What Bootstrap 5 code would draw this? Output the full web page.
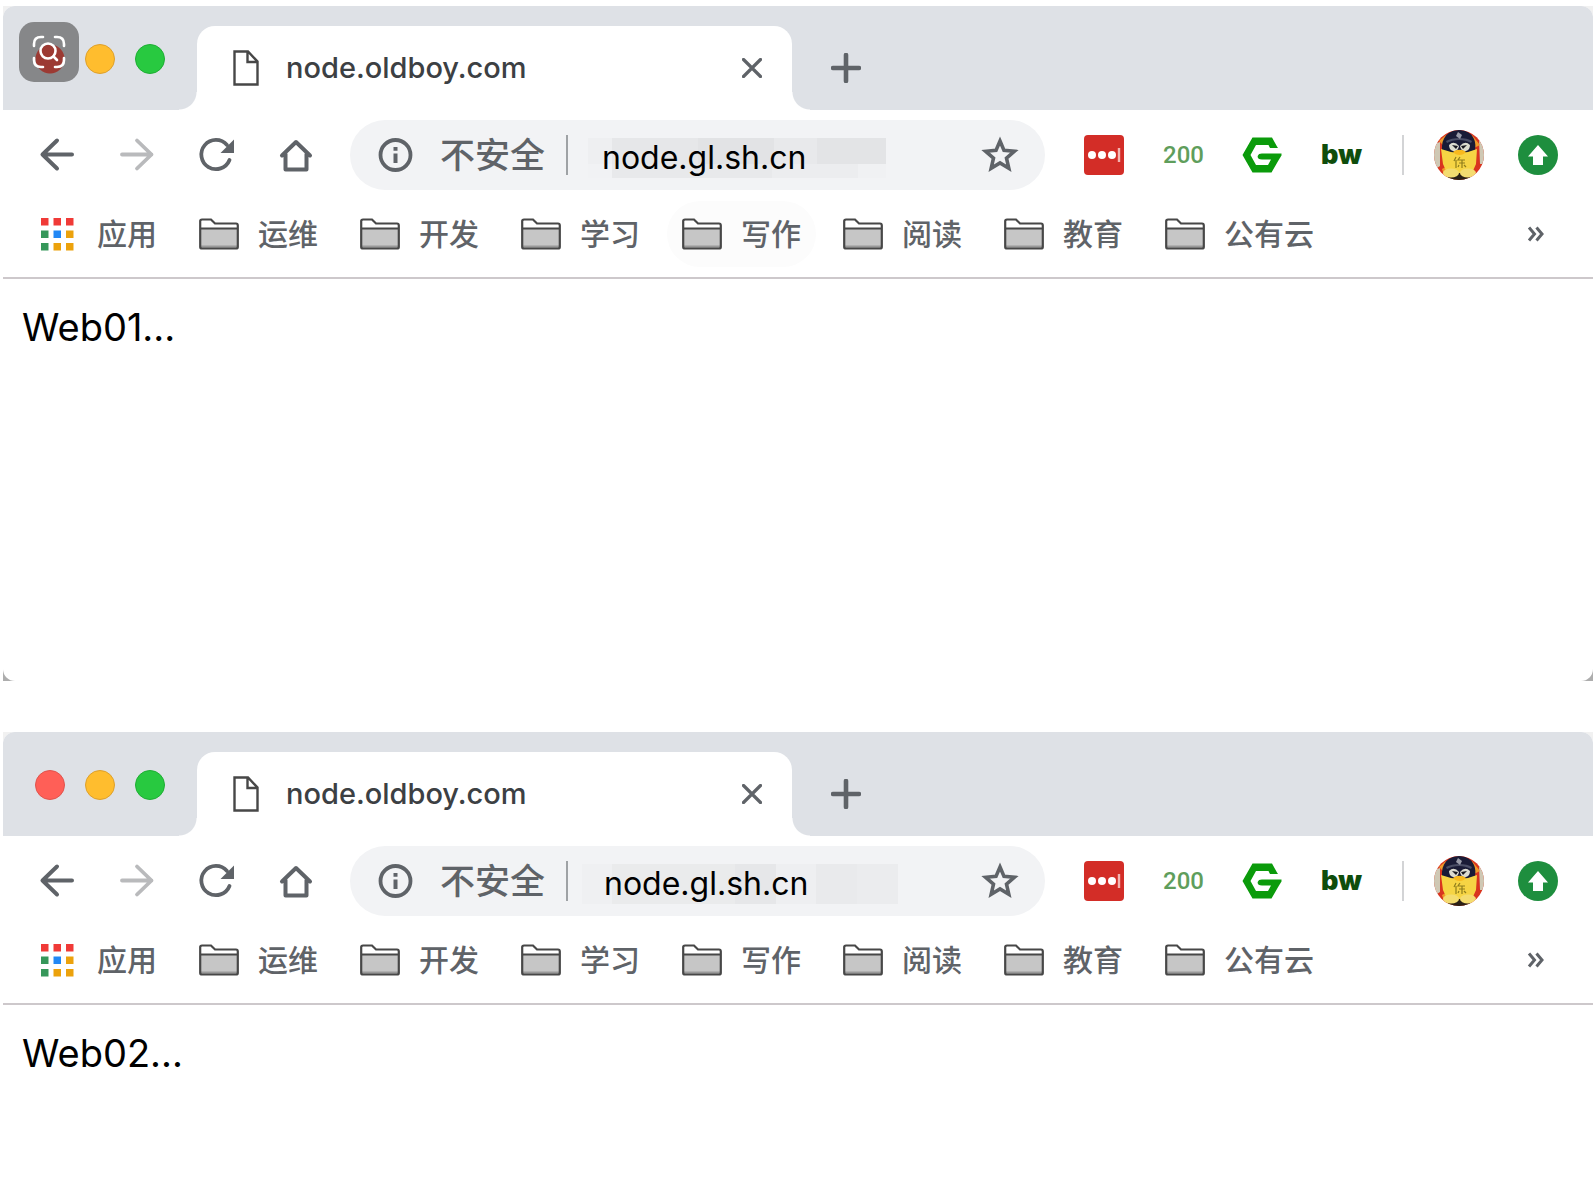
<!DOCTYPE html>
<html lang="zh-CN">
<head>
<meta charset="utf-8">
<meta name="viewport" content="width=device-width, initial-scale=1">
<title>node.oldboy.com</title>
<link href="https://cdn.jsdelivr.net/npm/bootstrap@5.3.0/dist/css/bootstrap.min.css" rel="stylesheet">
<style>
:root { --strip: #dee1e6; --ink: #5f6368; --pill: #f2f3f5; }
body { font-family: Inter, "Noto Sans CJK SC", sans-serif; color: #000; background: #fff; padding: 6px 3px 0; }
button { border: 0; background: none; padding: 0; color: var(--ink); }
svg { display: block; flex: none; }
.win-frame { background: linear-gradient(#f1f1f1 50%, #adadad 50%); margin-bottom: 51px; }
.win-frame.last { background: #f1f1f1; margin-bottom: 0; }
.win-body { background: #fff; border-radius: 12px; overflow: hidden; }
.last .win-body { border-radius: 12px 12px 0 0; }
.tabstrip { background: var(--strip); height: 104px; padding: 20px 0 0 32px; }
.lights { gap: 20px; width: 162px; padding-top: 18px; }
.light { width: 30px; height: 30px; border-radius: 50%; border: 1px solid; }
.light-r { background: #ff5f57; border-color: #e0544d; }
.light-y { background: #ffbd2e; border-color: #dea02c; }
.light-g { background: #28c940; border-color: #1eae34; }
.lens { left: 16px; top: 16px; width: 60px; height: 60px; border-radius: 15px; background: radial-gradient(circle at 31px 37px, #9c3a33 14px, #868789 15px); display: grid; place-items: center; }
.tab-active { background: #fff; width: 595px; height: 84px; border-radius: 18px 18px 0 0; padding: 0 30px 0 36px; }
.tab-active::before, .tab-active::after { content: ""; position: absolute; bottom: 0; width: 18px; height: 18px; }
.tab-active::before { left: -18px; background: radial-gradient(circle at 0 0, transparent 17px, #fff 18px); }
.tab-active::after { right: -18px; background: radial-gradient(circle at 100% 0, transparent 17px, #fff 18px); }
.tab-name { font-size: 29px; font-weight: 500; line-height: 40px; color: #3c4043; margin-left: 27px; }
.new-tab { margin-left: 39px; }
.toolbar { padding: 10px 35px 9px 34px; }
.nav-set { gap: 39px; margin-right: 36px; }
.nav-set button, .tool { width: 40px; height: 40px; display: grid; place-items: center; flex: none; }
.omni { background: var(--pill); height: 70px; border-radius: 35px; padding: 0 25px 0 28px; flex: 0 1 695px; min-width: 0; }
.omni .secure { font-size: 35px; font-weight: 500; line-height: 50px; color: var(--ink); margin-left: 26px; flex: none; }
.omni-rule { width: 2px; height: 40px; background: #9fa2a5; margin-left: 21px; flex: none; }
.url { border: 0; outline: 0; height: 50px; min-width: 0; font-size: 32px; line-height: 44px; color: #000; background-color: transparent; background-repeat: no-repeat; }
.url-a { margin-left: 20px; width: 298px; padding: 4px 0 0 14px;
  background-image: linear-gradient(90deg, #eeeff1 24px, #e6e7e9 24px 110px, #e2e3e5 110px 186px, #e8e9eb 186px 229px, #e3e4e6 229px), linear-gradient(90deg, #f1f2f4 24px, #e8e9eb 24px 184px, #ecedef 184px 270px, #f0f1f3 270px);
  background-size: 100% 26px, 100% 14px; background-position: 0 8px, 0 34px; }
.url-b { margin-left: 14px; width: 332px; padding: 4px 0 0 22px;
  background-image: linear-gradient(90deg, #eff0f2 30px, #eaebec 30px 153px, #e6e7e9 153px 194px, #eeeff1 194px 234px, #e9eaec 234px 275px, #ebecee 275px 316px, transparent 316px);
  background-size: 100% 40px; background-position: 0 8px; }
.ext-set { margin-left: 39px; gap: 39px; }
.lastpass { background: #d32d27; border-radius: 4px; }
.t200 { font-family: Roboto, sans-serif; font-weight: 500; font-size: 24px; line-height: 28px; color: #5f9e5c; }
.tbw { font-weight: 900; font-size: 27px; line-height: 30px; color: #0f4d0c; }
.ext-rule { width: 2px; height: 40px; background: #d3d4d6; margin-left: 2px; }
.user-set { gap: 34px; margin-left: auto; }
.avatar { width: 50px; height: 50px; border-radius: 50%; overflow: hidden; }
.bookmarks { height: 80px; padding: 0 49px 8px 37px; gap: 42px; border-bottom: 2px solid #cdc8cb; }
.bm { color: var(--ink); text-decoration: none; gap: 19px; font-size: 30px; font-weight: 500; line-height: 44px; white-space: nowrap; }
.bm-apps { gap: 23px; }
.bm-hot { background: #fcfcfc; border-radius: 33px; padding: 11px 15px; margin: 0 -15px; }
.page-text { font-size: 38px; line-height: 48px; padding: 24px 19px; margin: 0; }
.page-tall { min-height: 402px; }
</style>
</head>
<body class="d-flex flex-column min-vh-100">

<svg width="0" height="0" class="position-absolute" aria-hidden="true">
  <defs>
    <symbol id="i-doc" viewBox="0 0 26 36"><path d="M1.5 1.5H15L24.500 11.500V34.500H1.500Z M14.500 1.500V12H24.500" fill="none" stroke="#474747" stroke-width="2.400"/></symbol>
    <symbol id="i-x" viewBox="0 0 20 20"><path d="M1.500 1.500L18.500 18.500M18.500 1.500L1.500 18.500" stroke="#5f6368" stroke-width="3.200" stroke-linecap="round"/></symbol>
    <symbol id="i-plus" viewBox="0 0 30 30"><path d="M15 2V28M2 15H28" stroke="#5f6368" stroke-width="4.600" stroke-linecap="round"/></symbol>
    <symbol id="i-back" viewBox="0 0 40 40"><path d="M35 19.500H5.500M20 5.500L5.500 19.500L20 33.500" fill="none" stroke="currentColor" stroke-width="4" stroke-linecap="round" stroke-linejoin="round"/></symbol>
    <symbol id="i-fwd" viewBox="0 0 40 40"><path d="M6 19.500H35.500M21 5.500L35.500 19.500L21 33.500" fill="none" stroke="#b9babc" stroke-width="3.800" stroke-linecap="round" stroke-linejoin="round"/></symbol>
    <symbol id="i-reload" viewBox="0 0 40 40"><path d="M34.500 25A14.600 14.600 0 1 1 32 10" fill="none" stroke="currentColor" stroke-width="3.800" stroke-linecap="round"/><path d="M39 4.500V18H25.500Z" fill="currentColor"/></symbol>
    <symbol id="i-home" viewBox="0 0 40 40"><path d="M8 20.500L22 7L36 20.500M11.500 19V34.500H32.500V19" fill="none" stroke="currentColor" stroke-width="4" stroke-linecap="round" stroke-linejoin="round"/></symbol>
    <symbol id="i-info" viewBox="0 0 36 36"><circle cx="17.500" cy="18" r="15" fill="none" stroke="#5f6368" stroke-width="3.800"/><path d="M15.500 16.500H19.500V26H15.500ZM15.500 10H19.500V13.800H15.500Z" fill="#5f6368"/></symbol>
    <symbol id="i-star" viewBox="0 0 40 40"><path d="M20 6L24 15.400L34.300 16.300L26.500 23.100L28.800 33.200L20 27.900L11.200 33.200L13.500 23.100L5.700 16.300L16 15.400Z" fill="none" stroke="#5f6368" stroke-width="3.600"/></symbol>
    <symbol id="i-lp" viewBox="0 0 40 40"><g fill="#fff"><circle cx="8" cy="20" r="4"/><circle cx="18" cy="20" r="4"/><circle cx="28" cy="20" r="4"/></g><path d="M35 13V27" stroke="#f3b5b2" stroke-width="2.400"/></symbol>
    <symbol id="i-g" viewBox="0 0 40 36"><path d="M10.500 .5H30L35 9.500L36 11H28L26.500 8H14L8.500 18L14 28H26L29 22.500H20C16 22.500 15 20 16 18.500C16.500 17.300 17.500 16.500 20 16.500H39.500V18.500L37 22.500L29.500 35.500H10.500L.5 18Z" fill="#0b9b0b"/></symbol>
    <symbol id="i-up" viewBox="0 0 40 40"><circle cx="20" cy="20" r="20" fill="#1e8e3e"/><path d="M20 10L30 21.500H25V30H15V21.500H10Z" fill="#fff"/></symbol>
    <symbol id="i-avatar" viewBox="0 0 50 50">
      <rect width="50" height="50" fill="#d9351f"/>
      <path d="M0 14L6 12V36L0 40ZM45 10L50 13V34H46Z" fill="#cfc8b4"/>
      <path d="M5 11L12 5L11 17ZM38 5L46 15L40 18ZM8 39L11 48L17 50L12 37Z" fill="#f09a2b"/>
      <path d="M8 20C7 8 14 0 25 0S43 8 41 20L36 24H12Z" fill="#191b36"/>
      <path d="M12 11C19 7 32 7 38 11L37 13C30 9 20 9 13 13Z" fill="#4a4e66"/>
      <path d="M24 2L28 5L26 9L22 6Z" fill="#9a9ca9"/>
      <path d="M15 15Q20 10 25 16Q24 22 19 21Q15 20 15 15Z" fill="#dcdcd0"/><path d="M36 15Q31 10 26 16Q27 22 32 21Q36 20 36 15Z" fill="#dcdcd0"/>
      <path d="M18 15L24 16L22 19ZM33 15L27 16L29 19Z" fill="#17171f"/>
      <path d="M7 19L17 22L25 23L34 22L43 19L42 34L38 43L25 49L13 43L9 34Z" fill="#f6d444"/>
      <path d="M19 22C22 19 29 19 32 22C29 26 22 26 19 22Z" fill="#f8b91e"/>
      <path d="M12 41Q25 45 39 41L36 50H14Z" fill="#2b2016"/>
      <ellipse cx="17" cy="43" rx="8" ry="4.500" fill="#f4dc70"/><ellipse cx="34" cy="43" rx="8" ry="4.500" fill="#f4dc70"/>
      <path d="M22 27L20 31M22 30V38M26 27L24 30H31M25 33H31M28 30V38M25 35L24 37M30 35L32 37" fill="none" stroke="#8f7d1c" stroke-width="1.200"/>
    </symbol>
    <symbol id="i-apps" viewBox="0 0 34 34"><path d="M1 1H8.500V8.500H1ZM13.500 1H21V8.500H13.500ZM26 1H33.500V8.500H26Z" fill="#f03a37"/><path d="M1 13.500H8.500V21H1ZM1 26H8.500V33.500H1Z" fill="#36975a"/><path d="M13.500 13.500H21V21H13.500Z" fill="#2288f5"/><path d="M26 13.500H33.500V21H26ZM13.500 26H21V33.500H13.500ZM26 26H33.500V33.500H26Z" fill="#eca20c"/></symbol>
    <symbol id="i-folder" viewBox="0 0 40 32"><path d="M1.200 29V3Q1.200 1.500 3 1.500H12L16 5.500H37Q38.800 5.500 38.800 7.500V29Q38.800 30.500 37 30.500H3Q1.200 30.500 1.200 29Z" fill="#fff"/><path d="M1.200 10.500H38.800V30H1.200Z" fill="#c6c6c6"/><path d="M2 28.500H38" stroke="#999" stroke-width="2"/><path d="M1.200 10.500H38.800M1.200 29V3Q1.200 1.500 3 1.500H12L16 5.500H37Q38.800 5.500 38.800 7.500V29Q38.800 30.500 37 30.500H3Q1.200 30.500 1.200 29Z" fill="none" stroke="#474747" stroke-width="2.200"/></symbol>
    <symbol id="i-more" viewBox="0 0 16 16"><path d="M1.500 1.500L7 8L1.500 14.500M9 1.500L14.500 8L9 14.500" fill="none" stroke="#5f6368" stroke-width="3"/></symbol>
    <symbol id="i-lens" viewBox="0 0 34 34"><g fill="none" stroke="#fff" stroke-width="2.600" stroke-linecap="round"><path d="M2 11V9Q2 2 9 2H11M23 2H25Q32 2 32 9V11M32 23V25Q32 32 25 32H23M11 32H9Q2 32 2 25V23"/><circle cx="16" cy="16" r="7.500"/><path d="M21.500 21.500L25 25"/></g></symbol>
  </defs>
</svg>

<section class="win-frame position-relative">
  <div class="win-body">
    <header class="tabstrip d-flex">
      <div class="lights d-flex flex-shrink-0"><span class="light light-r"></span><span class="light light-y"></span><span class="light light-g"></span></div>
      <div class="tab-active position-relative d-flex align-items-center">
        <svg width="26" height="36"><use href="#i-doc"/></svg>
        <span class="tab-name">node.oldboy.com</span>
        <button class="ms-auto" aria-label="关闭标签页"><svg width="20" height="20"><use href="#i-x"/></svg></button>
      </div>
      <button class="new-tab" aria-label="新标签页"><svg width="30" height="30"><use href="#i-plus"/></svg></button>
    </header>
    <div class="toolbar d-flex align-items-center">
      <nav class="nav-set d-flex">
        <button aria-label="后退"><svg width="40" height="40"><use href="#i-back"/></svg></button>
        <button aria-label="前进"><svg width="40" height="40"><use href="#i-fwd"/></svg></button>
        <button aria-label="刷新"><svg width="40" height="40"><use href="#i-reload"/></svg></button>
        <button aria-label="主页"><svg width="40" height="40"><use href="#i-home"/></svg></button>
      </nav>
      <div class="omni d-flex align-items-center">
        <svg width="36" height="36"><use href="#i-info"/></svg>
        <label class="secure" for="url1">不安全</label>
        <span class="omni-rule"></span>
        <input class="url url-a" id="url1" type="text" value="node.gl.sh.cn">
        <button class="ms-auto" aria-label="收藏"><svg width="40" height="40"><use href="#i-star"/></svg></button>
      </div>
      <div class="ext-set d-flex align-items-center">
        <button class="tool lastpass" aria-label="LastPass"><svg width="40" height="40"><use href="#i-lp"/></svg></button>
        <button class="tool t200">200</button>
        <button class="tool" aria-label="G"><svg width="40" height="36"><use href="#i-g"/></svg></button>
        <button class="tool tbw">bw</button>
        <span class="ext-rule"></span>
      </div>
      <div class="user-set d-flex align-items-center">
        <button class="avatar" aria-label="用户"><svg width="50" height="50"><use href="#i-avatar"/></svg></button>
        <button class="tool" aria-label="更新"><svg width="40" height="40"><use href="#i-up"/></svg></button>
      </div>
    </div>
    <nav class="bookmarks d-flex align-items-center">
      <a href="#" class="bm bm-apps d-flex align-items-center"><svg width="34" height="34"><use href="#i-apps"/></svg>应用</a>
      <a href="#" class="bm d-flex align-items-center"><svg width="40" height="32"><use href="#i-folder"/></svg>运维</a>
      <a href="#" class="bm d-flex align-items-center"><svg width="40" height="32"><use href="#i-folder"/></svg>开发</a>
      <a href="#" class="bm d-flex align-items-center"><svg width="40" height="32"><use href="#i-folder"/></svg>学习</a>
      <a href="#" class="bm bm-hot d-flex align-items-center"><svg width="40" height="32"><use href="#i-folder"/></svg>写作</a>
      <a href="#" class="bm d-flex align-items-center"><svg width="40" height="32"><use href="#i-folder"/></svg>阅读</a>
      <a href="#" class="bm d-flex align-items-center"><svg width="40" height="32"><use href="#i-folder"/></svg>教育</a>
      <a href="#" class="bm d-flex align-items-center"><svg width="40" height="32"><use href="#i-folder"/></svg>公有云</a>
      <button class="ms-auto" aria-label="更多书签"><svg width="17" height="16"><use href="#i-more"/></svg></button>
    </nav>
    <p class="page-text page-tall">Web01...</p>
  </div>
  <button class="lens position-absolute" aria-label="图片搜索"><svg width="34" height="34"><use href="#i-lens"/></svg></button>
</section>

<section class="win-frame last flex-grow-1 d-flex flex-column">
  <div class="win-body flex-grow-1">
    <header class="tabstrip d-flex">
      <div class="lights d-flex flex-shrink-0"><span class="light light-r"></span><span class="light light-y"></span><span class="light light-g"></span></div>
      <div class="tab-active position-relative d-flex align-items-center">
        <svg width="26" height="36"><use href="#i-doc"/></svg>
        <span class="tab-name">node.oldboy.com</span>
        <button class="ms-auto" aria-label="关闭标签页"><svg width="20" height="20"><use href="#i-x"/></svg></button>
      </div>
      <button class="new-tab" aria-label="新标签页"><svg width="30" height="30"><use href="#i-plus"/></svg></button>
    </header>
    <div class="toolbar d-flex align-items-center">
      <nav class="nav-set d-flex">
        <button aria-label="后退"><svg width="40" height="40"><use href="#i-back"/></svg></button>
        <button aria-label="前进"><svg width="40" height="40"><use href="#i-fwd"/></svg></button>
        <button aria-label="刷新"><svg width="40" height="40"><use href="#i-reload"/></svg></button>
        <button aria-label="主页"><svg width="40" height="40"><use href="#i-home"/></svg></button>
      </nav>
      <div class="omni d-flex align-items-center">
        <svg width="36" height="36"><use href="#i-info"/></svg>
        <label class="secure" for="url2">不安全</label>
        <span class="omni-rule"></span>
        <input class="url url-b" id="url2" type="text" value="node.gl.sh.cn">
        <button class="ms-auto" aria-label="收藏"><svg width="40" height="40"><use href="#i-star"/></svg></button>
      </div>
      <div class="ext-set d-flex align-items-center">
        <button class="tool lastpass" aria-label="LastPass"><svg width="40" height="40"><use href="#i-lp"/></svg></button>
        <button class="tool t200">200</button>
        <button class="tool" aria-label="G"><svg width="40" height="36"><use href="#i-g"/></svg></button>
        <button class="tool tbw">bw</button>
        <span class="ext-rule"></span>
      </div>
      <div class="user-set d-flex align-items-center">
        <button class="avatar" aria-label="用户"><svg width="50" height="50"><use href="#i-avatar"/></svg></button>
        <button class="tool" aria-label="更新"><svg width="40" height="40"><use href="#i-up"/></svg></button>
      </div>
    </div>
    <nav class="bookmarks d-flex align-items-center">
      <a href="#" class="bm bm-apps d-flex align-items-center"><svg width="34" height="34"><use href="#i-apps"/></svg>应用</a>
      <a href="#" class="bm d-flex align-items-center"><svg width="40" height="32"><use href="#i-folder"/></svg>运维</a>
      <a href="#" class="bm d-flex align-items-center"><svg width="40" height="32"><use href="#i-folder"/></svg>开发</a>
      <a href="#" class="bm d-flex align-items-center"><svg width="40" height="32"><use href="#i-folder"/></svg>学习</a>
      <a href="#" class="bm d-flex align-items-center"><svg width="40" height="32"><use href="#i-folder"/></svg>写作</a>
      <a href="#" class="bm d-flex align-items-center"><svg width="40" height="32"><use href="#i-folder"/></svg>阅读</a>
      <a href="#" class="bm d-flex align-items-center"><svg width="40" height="32"><use href="#i-folder"/></svg>教育</a>
      <a href="#" class="bm d-flex align-items-center"><svg width="40" height="32"><use href="#i-folder"/></svg>公有云</a>
      <button class="ms-auto" aria-label="更多书签"><svg width="17" height="16"><use href="#i-more"/></svg></button>
    </nav>
    <p class="page-text">Web02...</p>
  </div>
</section>

<script src="https://cdn.jsdelivr.net/npm/bootstrap@5.3.0/dist/js/bootstrap.bundle.min.js"></script>
</body>
</html>
